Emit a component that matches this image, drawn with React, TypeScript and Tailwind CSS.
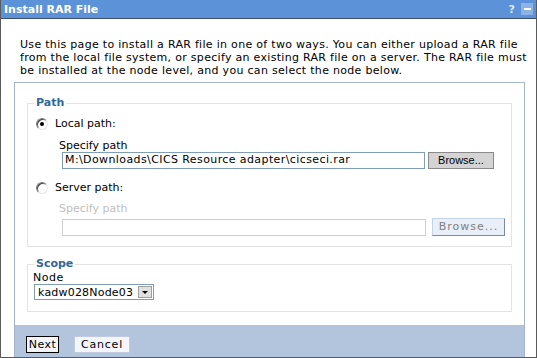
import type { ReactNode } from "react";

const FONT = "font-['DejaVu_Sans','Verdana',sans-serif]";

function Radio({ checked }: { checked?: boolean }) {
  return (
    <span className="relative inline-flex h-[12px] w-[12px] items-center justify-center rounded-full border border-t-[#808080] border-l-[#808080] border-b-[#e8e8e8] border-r-[#e8e8e8] bg-white shadow-[inset_1px_1px_0_#404040]">
      {checked && <span className="h-[4px] w-[4px] rounded-full bg-black" />}
    </span>
  );
}

function Group({
  legend,
  className,
  children,
}: {
  legend: string;
  className?: string;
  children: ReactNode;
}) {
  return (
    <div className={`relative ml-[12px] w-[485px] border border-[#e3e3e3] ${className ?? ""}`}>
      <span className="absolute -top-[8px] left-[6px] bg-white px-[2px] text-[11px] leading-[13px] font-bold text-[#336699]">
        {legend}
      </span>
      {children}
    </div>
  );
}

export default function App() {
  return (
    <div className={`flex h-[358px] w-[537px] flex-col overflow-hidden border-x border-b border-[#5a5a5a] bg-white ${FONT}`}>
      <div className="flex h-[19px] shrink-0 items-center justify-between border-b border-[#3d4f66] bg-[#5b92d8] pl-[3px] pr-[3px]">
        <span className="text-[11px] font-bold leading-none text-white">Install RAR File</span>
        <div className="flex items-center gap-[6px]">
          <span className="text-[11px] font-bold leading-none text-[#dfe9f7]">?</span>
          <span className="flex h-[12px] w-[12px] items-center justify-center bg-[#8cb2e6]">
            <span className="h-[2px] w-[7px] bg-white" />
          </span>
        </div>
      </div>

      <p className="mt-[19px] ml-[19px] w-[510px] text-[11px] leading-[13px] tracking-[0.3px] whitespace-nowrap text-black">
        Use this page to install a RAR file in one of two ways. You can either upload a RAR file
        <br />
        from the local file system, or specify an existing RAR file on a server. The RAR file must
        <br />
        be installed at the node level, and you can select the node below.
      </p>

      <div className="mt-[5px] ml-[13px] flex w-[511px] flex-1 flex-col border-x border-t border-[#a3b4cc]">
        <Group legend="Path" className="mt-[20px] h-[144px]">
          <div className="mt-[13px] ml-[8px] flex items-center gap-[7px] text-[11px] leading-[13px]">
            <Radio checked />
            <span>Local path:</span>
          </div>
          <div className="mt-[9px] ml-[31px] text-[11px] leading-[13px]">Specify path</div>
          <div className="ml-[34px] flex items-center gap-[3px]">
            <div className="flex h-[17px] w-[363px] items-center border border-[#7f9db9] px-[2px] text-[11px] tracking-[0.4px] whitespace-nowrap">
              M:\Downloads\CICS Resource adapter\cicseci.rar
            </div>
            <button className="h-[17px] w-[66px] border border-[#8a8a8a] bg-[#d4d4d4] font-['Liberation_Sans',Arial,sans-serif] text-[11px] leading-none text-black">
              Browse...
            </button>
          </div>
          <div className="mt-[12px] ml-[8px] flex items-center gap-[7px] text-[11px] leading-[13px]">
            <Radio />
            <span>Server path:</span>
          </div>
          <div className="mt-[8px] ml-[31px] text-[11px] leading-[13px] text-[#c0c0c0]">
            Specify path
          </div>
          <div className="mt-[2px] ml-[34px] flex items-center gap-[6px]">
            <div className="mt-[2px] h-[17px] w-[364px] border border-[#cfcfcf]" />
            <button className="h-[18px] w-[73px] border border-[#7a8ba3] border-t-[#c5d3e6] border-l-[#c5d3e6] bg-[#e9eff9] text-[11px] leading-none tracking-[1px] text-[#808080]">
              Browse...
            </button>
          </div>
        </Group>

        <Group legend="Scope" className="mt-[17px] h-[48px]">
          <div className="mt-[6px] ml-[5px] text-[11px] leading-[13px] tracking-[0.5px]">Node</div>
          <div className="ml-[6px] flex h-[16px] w-[120px] items-center border border-[#7f9db9] bg-white">
            <span className="flex-1 pl-[3px] text-[11px] leading-none tracking-[0.2px]">kadw028Node03</span>
            <span className="mr-[1px] flex h-[12px] w-[14px] items-center justify-center border border-[#a0a0a0] bg-[#e0e0e0]">
              <span className="h-0 w-0 border-x-[3px] border-t-[3px] border-x-transparent border-t-black" />
            </span>
          </div>
        </Group>

        <div className="mt-[13px] flex flex-1 items-start gap-[15px] bg-[#b2c5dc] pt-[11px] pl-[11px]">
          <button className="h-[17px] w-[33px] border border-black bg-[#f4f6fb] text-[11px] leading-none tracking-[0.5px] text-black">
            Next
          </button>
          <button className="h-[17px] w-[56px] border border-[#c0cbe0] bg-[#f4f6fb] text-[11px] leading-none tracking-[0.8px] text-black">
            Cancel
          </button>
        </div>
      </div>
    </div>
  );
}
